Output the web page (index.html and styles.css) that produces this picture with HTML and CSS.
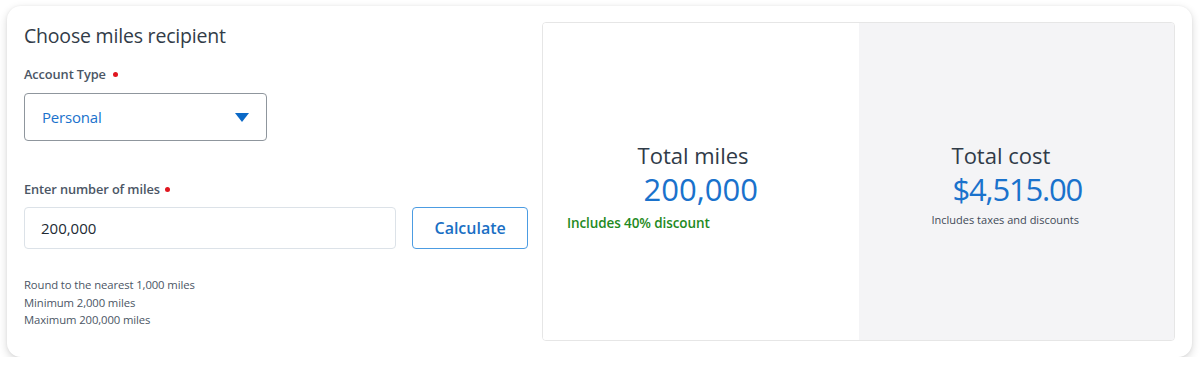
FILE: index.html
```html
<!DOCTYPE html>
<html>
<head>
<meta charset="utf-8">
<link rel="stylesheet" href="styles.css">
</head>
<body>
<div class="card">
  <div class="form">
    <h2 class="title">Choose miles recipient</h2>
    <div class="label label-account">Account Type <span class="dot"></span></div>
    <div class="select">
      <span class="select-value">Personal</span>
      <svg class="caret" width="14" height="9" viewBox="0 0 14 9"><path d="M0 0 H14 L7 9 Z" fill="#0b69c7"/></svg>
    </div>
    <div class="label label-miles">Enter number of miles<span class="dot"></span></div>
    <div class="row">
      <div class="input">200,000</div>
      <button class="btn">Calculate</button>
    </div>
    <div class="help">
      <div>Round to the nearest 1,000 miles</div>
      <div>Minimum 2,000 miles</div>
      <div>Maximum 200,000 miles</div>
    </div>
  </div>
  <div class="summary">
    <div class="half half-miles">
      <div class="block">
        <div class="head">Total miles</div>
        <div class="value">200,000</div>
      </div>
      <div class="note-green">Includes 40% discount</div>
    </div>
    <div class="half half-cost">
      <div class="block">
        <div class="head">Total cost</div>
        <div class="value value-cost">$4,515.00</div>
      </div>
      <div class="note">Includes taxes and discounts</div>
    </div>
  </div>
</div>
</body>
</html>
```
FILE: styles.css
```css
* { box-sizing: border-box; }
html, body { margin: 0; background: #ffffff; }
body {
  padding: 6px 8px 0 7px;
  font-family: "Open Sans", "Noto Sans", sans-serif;
  color: #333e4b;
}
.card {
  width: 1185px;
  height: 351px;
  background: #fff;
  border-radius: 14px;
  box-shadow: 0 3px 8px rgba(0,0,0,0.16), 0 0 3px rgba(0,0,0,0.05);
  padding: 16px 17px;
  display: flex;
  gap: 14px;
}
.form { width: 504px; flex: none; }
.title {
  margin: 0;
  font-size: 19.5px;
  font-weight: 400;
  line-height: 28px;
  color: #323c48;
  letter-spacing: -0.2px;
}
.label {
  font-size: 12.8px;
  line-height: 20px;
  font-weight: 600;
  color: #4b5665;
  display: flex;
  align-items: center;
  letter-spacing: -0.1px;
}
.label-account { margin-top: 14px; }
.label-account .dot { margin-left: 7px; }
.label-miles { margin-top: 38px; }
.label-miles .dot { margin-left: 5px; }
.dot {
  width: 5px; height: 5px; border-radius: 50%;
  background: #e0161f;
  display: inline-block;
}
.select {
  margin-top: 9px;
  width: 243px;
  height: 48px;
  border: 1px solid #8f969d;
  border-radius: 4px;
  display: flex;
  align-items: center;
  justify-content: space-between;
  padding: 0 17px 0 17px;
}
.select-value { font-size: 15px; color: #1a72cc; letter-spacing: -0.2px; }
.caret { display: block; margin-top: 1px; }
.row { margin-top: 8px; display: flex; gap: 16px; }
.input {
  width: 373px;
  height: 42px;
  border: 1px solid #dce2e8;
  border-radius: 4px;
  padding: 0 16px;
  display: flex;
  align-items: center;
  font-size: 15px;
  color: #222a33;
}
.btn {
  width: 116px;
  height: 42px;
  border: 1px solid #4c9ce2;
  border-radius: 4px;
  background: #fff;
  color: #1a6fc4;
  font-family: "Open Sans", "Noto Sans", sans-serif;
  font-size: 16px;
  font-weight: 600;
  padding: 0;
}
.help {
  margin-top: 27px;
  font-size: 11.3px;
  line-height: 17.5px;
  color: #4b5665;
  letter-spacing: -0.1px;
}
.summary {
  flex: 1;
  display: flex;
  border: 1px solid #e6e6e6;
  border-radius: 4px;
  overflow: hidden;
}
.half {
  flex: 1;
  padding-top: 118px;
  display: flex;
  flex-direction: column;
}
.half-miles { background: #fff; }
.half-cost { background: #f4f4f6; }
.block { align-self: center; }
.head {
  font-size: 22px;
  line-height: 28px;
  color: #303b48;
}
.value {
  font-size: 31px;
  line-height: 38px;
  color: #1a72cc;
  margin-top: 1px;
}
.half-miles .head { margin-left: -6px; }
.half-cost .block { margin-left: 2px; }
.half-cost .head { margin-left: -1px; }
.value-cost { letter-spacing: -1.2px; }
.note-green {
  margin-top: 5px;
  padding-left: 24px;
  font-size: 13.5px;
  line-height: 20px;
  font-weight: 600;
  color: #1f8a23;
  letter-spacing: -0.1px;
}
.note {
  margin-top: 3px;
  padding-left: 73px;
  font-size: 11px;
  line-height: 18px;
  color: #3f4a57;
}
```
